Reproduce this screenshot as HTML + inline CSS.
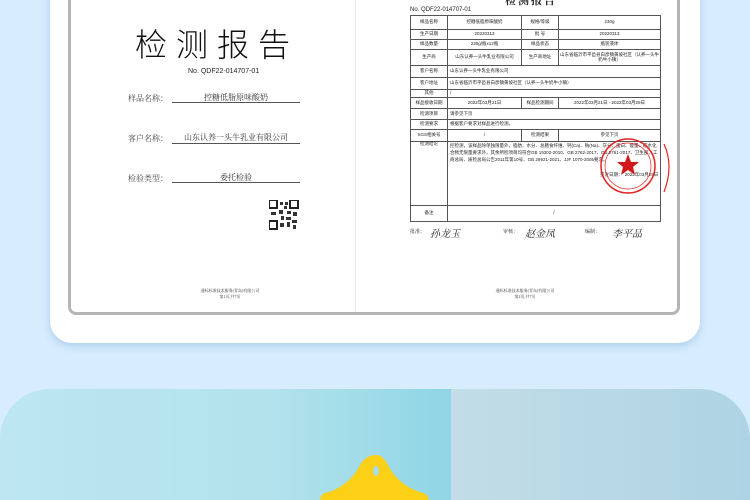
<!DOCTYPE html>
<html><head><meta charset="utf-8"><style>
*{margin:0;padding:0;box-sizing:border-box}
html,body{width:750px;height:500px;overflow:hidden}
body{background:#d7ecfd;position:relative;font-family:"Liberation Serif","Noto Serif CJK SC",serif;color:#222}
.card{position:absolute;left:50px;top:-30px;width:650px;height:373px;background:#fff;border-radius:22px;box-shadow:0 3px 8px rgba(120,170,220,.45)}
.paper{position:absolute;left:68px;top:-10px;width:612px;height:325px;border:3px solid #b5b5b5;border-top:none;border-radius:0 0 8px 8px;background:#fff}
.div{position:absolute;left:355px;top:0;width:1px;height:312px;background:#e6e6e6}
.t{position:absolute;white-space:nowrap}
.title{left:135px;top:20px;font-size:32px;letter-spacing:9px;font-family:"Noto Sans CJK SC",sans-serif;font-weight:300;color:#111}
.lab{font-size:8px;color:#444}
.ul{position:absolute;left:172px;width:128px;height:1px;background:#555}
.val{position:absolute;left:172px;width:128px;text-align:center;font-size:8px;color:#333}
.sm{font-size:4px;color:#333;text-align:center}
table{position:absolute;left:410px;top:15px;width:251px;border-collapse:collapse;font-size:4.5px;font-family:"Liberation Sans","Noto Sans CJK SC",sans-serif}
td{border:1px solid #555;text-align:center;padding:0;line-height:1.1}
.l{text-align:left;padding-left:2px}
.bot{position:absolute;left:0;top:389px;width:750px;height:111px;border-radius:50px 50px 0 0;overflow:hidden}
.bl{position:absolute;left:0;top:0;width:451px;height:100%;background:linear-gradient(90deg,#bde6f0,#b3e2ec 60%,#8fd5e5)}
.br{position:absolute;left:451px;top:0;width:299px;height:100%;background:linear-gradient(90deg,#c2dde7,#aed3e4)}
</style></head><body>
<div class="card"></div>
<div class="paper"></div>
<div class="div" style="left:355px"></div>
<div class="t title">检测报告</div>
<div class="t" style="left:188px;top:68px;font-size:7px;font-family:'Liberation Sans',sans-serif">No. QDF22-014707-01</div>
<div class="t lab" style="left:128px;top:93px">样品名称：</div>
<div class="val" style="top:92px">控糖低脂原味酸奶</div><div class="ul" style="top:102px"></div>
<div class="t lab" style="left:128px;top:133px">客户名称：</div>
<div class="val" style="top:132px">山东认养一头牛乳业有限公司</div><div class="ul" style="top:143px"></div>
<div class="t lab" style="left:128px;top:173px">检验类型：</div>
<div class="val" style="top:172px">委托检验</div><div class="ul" style="top:182px"></div>
<svg class="t" style="left:269px;top:200px" width="30" height="31"><rect width="30" height="30" fill="#fff"/><rect x="0" y="0" width="8" height="8" fill="none" stroke="#222" stroke-width="2"/><rect x="21" y="0" width="8" height="8" fill="none" stroke="#222" stroke-width="2"/><rect x="0" y="21" width="8" height="8" fill="none" stroke="#222" stroke-width="2"/><path d="M11 2h3v3h-3zM15 6h3v3h-3zM10 10h4v4h-4zM18 11h4v3h-4zM24 12h4v4h-4zM12 16h3v4h-3zM17 17h5v3h-5zM2 12h5v3h-5zM11 23h4v4h-4zM18 22h3v5h-3zM23 20h5v3h-5zM24 25h3v4h-3zM16 2h3v3h-3z" fill="#333"/></svg>
<div class="t sm" style="left:190px;top:288px;width:80px">通标标准技术服务(青岛)有限公司<br>第1页,共7页</div>
<div class="t" style="left:505px;top:-8px;font-size:11px;font-weight:bold;letter-spacing:2px">检测报告</div>
<div class="t" style="left:410px;top:7px;font-size:6px;font-family:'Liberation Sans',sans-serif">No. QDF22-014707-01</div>
<table>
<tr style="height:14px"><td style="width:37px">样品名称</td><td style="width:74px">控糖低脂原味酸奶</td><td style="width:37px">规格/等级</td><td>230g</td></tr>
<tr style="height:10px"><td>生产日期</td><td>20220313</td><td>批 号</td><td>20220313</td></tr>
<tr style="height:10px"><td>样品数量</td><td>230g/瓶x12瓶</td><td>样品状态</td><td>瓶装液体</td></tr>
<tr style="height:16px"><td>生产商</td><td>山东认养一头牛乳业有限公司</td><td>生产商地址</td><td>山东省临沂市平邑县白彦镇黄坡社区（认养一头牛奶牛小镇）</td></tr>
<tr style="height:12px"><td>客户名称</td><td colspan="3" class="l">山东认养一头牛乳业有限公司</td></tr>
<tr style="height:12px"><td>客户地址</td><td colspan="3" class="l">山东省临沂市平邑县白彦镇黄坡社区（认养一头牛奶牛小镇）</td></tr>
<tr style="height:8px"><td>其他</td><td colspan="3" class="l">/</td></tr>
<tr style="height:11px"><td>样品接收日期</td><td>2022年03月21日</td><td>样品检测期间</td><td>2022年03月21日 - 2022年03月29日</td></tr>
<tr style="height:11px"><td>检测项目</td><td colspan="3" class="l">请参见下页</td></tr>
<tr style="height:10px"><td>检测要求</td><td colspan="3" class="l">根据客户要求对样品进行检测。</td></tr>
<tr style="height:12px"><td>SGS相关号</td><td>/</td><td>检测结果</td><td>参见下页</td></tr>
<tr style="height:64px"><td style="vertical-align:top">检测结论</td><td colspan="3" class="l" style="vertical-align:top;line-height:1.6">控检测，该样品除单独限量外，脂肪、水分、总膳食纤维、钙(Ca)、钠(Na)、灰分、蛋白、能量、碳水化合物无限量要求外，其余所检项目均符合GB 19302-2010、GB 2762-2017、GB 2761-2017、卫生部、工商总局、质检总局公告2011年第10号、GB 29921-2021、JJF 1070-2005要求。<br><br><span style="margin-left:150px">签发日期：　2022年03月29日</span></td></tr>
<tr style="height:16px"><td>备注</td><td colspan="3">/</td></tr>
</table>
<svg class="t" style="left:598px;top:136px" width="76" height="64"><circle cx="30" cy="30" r="27" fill="none" stroke="#e52222" stroke-width="1.5"/><circle cx="30" cy="30" r="23" fill="none" stroke="#e52222" stroke-width=".7"/><polygon points="30,18 33,26 41,26 35,31 37,39 30,34 23,39 25,31 19,26 27,26" fill="#d21818"/><path d="M66 8q10 22 0 48" fill="none" stroke="#e52222" stroke-width="1.2"/></svg>
<div class="t" style="left:410px;top:228px;font-size:5px">批准：</div>
<div class="t" style="left:430px;top:225px;font-size:10px;font-style:italic;font-family:'Noto Serif CJK SC',serif">孙龙玉</div>
<div class="t" style="left:503px;top:228px;font-size:5px">审核：</div>
<div class="t" style="left:525px;top:225px;font-size:10px;font-style:italic;font-family:'Noto Serif CJK SC',serif">赵金凤</div>
<div class="t" style="left:585px;top:228px;font-size:5px">编制：</div>
<div class="t" style="left:612px;top:225px;font-size:10px;font-style:italic;font-family:'Noto Serif CJK SC',serif">李平品</div>
<div class="t sm" style="left:480px;top:288px;width:90px">通标标准技术服务(青岛)有限公司<br>第2页,共7页</div>
<div class="bot"><div class="bl"></div><div class="br"></div></div>
<svg class="t" style="left:320px;top:455px" width="112" height="45"><path d="M0 45 L1 41 Q3 38 9 37 Q27 31 38 14 Q44 0 56 0 Q64 0 70 14 Q81 31 100 37 Q106 38 108 42 L109 45Z" fill="#fbd016"/><ellipse cx="56" cy="16" rx="3" ry="5" fill="#a8dde8"/></svg>
</body></html>
